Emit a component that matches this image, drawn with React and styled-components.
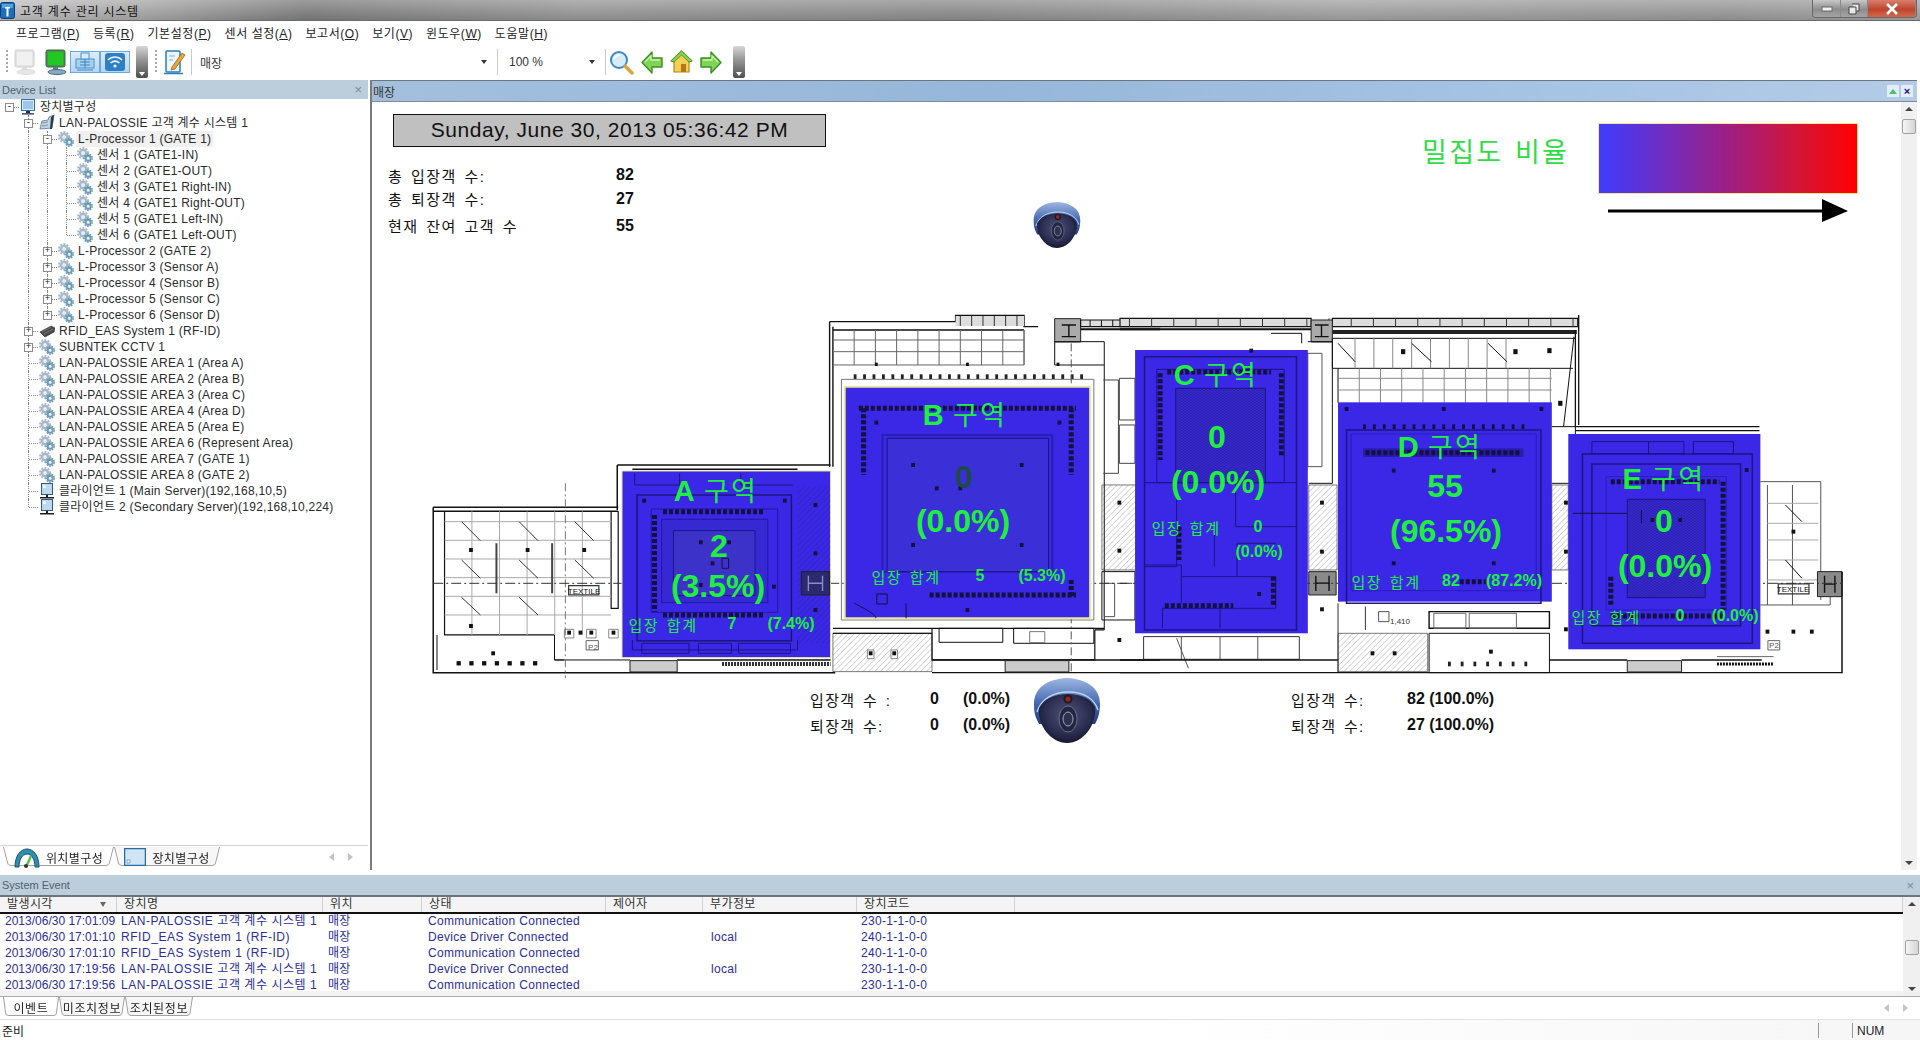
import React from 'react';
import styled, { createGlobalStyle } from 'styled-components';

const FONT = `"Liberation Sans", "Noto Sans CJK KR", sans-serif`;
const GREEN = '#1ff03f';
const ZONE_BLUE = '#3a28e6';
const PLAN_X = 425;
const PLAN_Y = 310;

const GlobalStyle = createGlobalStyle`
    html, body {
        margin: 0;
        padding: 0;
        background: #fff;
        overflow: hidden;
    }
    body {
        font-family: ${FONT};
        font-size: 12px;
        color: #222;
    }
`;

const Window = styled.div`
    width: 1920px;
    height: 1040px;
    display: flex;
    flex-direction: column;
    overflow: hidden;
`;

/* title bar */
const TitleBar = styled.div`
    height: 20px;
    flex: none;
    display: flex;
    align-items: center;
    justify-content: space-between;
    border-bottom: 1px solid #6b6b6b;
    background: linear-gradient(180deg, rgba(255, 255, 255, 0.22), rgba(0, 0, 0, 0.1)),
        linear-gradient(90deg, #c4c4c4, #a8a8a8 8%, #7f7f7f 16%, #9a9a9a 30%, #8f8f8f 50%, #a5a5a5 70%, #9b9b9b 90%, #a8a8a8);
`;

const TitleLeft = styled.div`
    display: flex;
    align-items: center;
    gap: 5px;
    font-size: 12px;
    letter-spacing: 0.8px;
    color: #111;
`;

const WindowButtons = styled.div`
    display: flex;
    height: 17px;
    align-self: flex-start;
    margin-right: 3px;
    border: 1px solid #666;
    border-top: none;
    border-radius: 0 0 4px 4px;
    overflow: hidden;
`;

const WindowButton = styled.div`
    width: ${(p) => p.$w}px;
    display: flex;
    align-items: center;
    justify-content: center;
    border-right: 1px solid #8a8a8a;
    background: ${(p) =>
        p.$close
            ? 'linear-gradient(180deg, #d9806f, #c0442c 55%, #cf6a50)'
            : 'linear-gradient(180deg, #c8c8c8, #8d8d8d 55%, #a5a5a5)'};
`;

/* menu and tool bars */
const MenuBar = styled.div`
    height: 23px;
    flex: none;
    display: flex;
    align-items: center;
    gap: 13px;
    padding-left: 16px;
    background: #fff;
    font-size: 12px;
    letter-spacing: 0.55px;
    color: #222;
`;

const Mnemonic = styled.span`
    text-decoration: underline;
`;

const ToolBar = styled.div`
    height: 36px;
    flex: none;
    display: flex;
    align-items: center;
    padding-left: 6px;
    background: #fff;
`;

const Gripper = styled.div`
    width: 2px;
    height: 24px;
    flex: none;
    margin-right: ${(p) => p.$gap}px;
    background: repeating-linear-gradient(180deg, #a9a9a9 0 2px, transparent 2px 4px);
`;

const ToolSlot = styled.div`
    width: ${(p) => p.$w}px;
    height: 22px;
    flex: none;
    display: flex;
    align-items: center;
    justify-content: center;
    margin-right: ${(p) => p.$gap || 0}px;
`;

const ActiveSlot = styled(ToolSlot)`
    border: 1px solid #6fa9dc;
    box-sizing: border-box;
    background: linear-gradient(180deg, #dcecfa, #b5d6f3);
`;

const Overflow = styled.div`
    width: 12px;
    height: 32px;
    flex: none;
    margin: 0 ${(p) => p.$gap}px 0 6px;
    border-radius: 2px;
    display: flex;
    align-items: flex-end;
    justify-content: center;
    padding-bottom: 2px;
    box-sizing: border-box;
    background: linear-gradient(180deg, #d6d6d6, #9a9a9a 40%, #4f4f4f);
    &::after {
        content: '';
        border-left: 3px solid transparent;
        border-right: 3px solid transparent;
        border-top: 4px solid #fff;
    }
`;

const ToolSep = styled.div`
    width: 1px;
    height: 26px;
    flex: none;
    margin-right: ${(p) => p.$gap || 0}px;
    background: #c9c9c9;
`;

const Combo = styled.div`
    width: ${(p) => p.$w}px;
    height: 22px;
    flex: none;
    box-sizing: border-box;
    padding: 0 10px 0 ${(p) => p.$pad}px;
    display: flex;
    align-items: center;
    justify-content: space-between;
    font-size: 12px;
    color: #333;
`;

const ComboArrow = styled.div`
    width: 0;
    border-left: 3px solid transparent;
    border-right: 3px solid transparent;
    border-top: 4px solid #333;
`;

/* work area */
const Workspace = styled.div`
    height: 790px;
    flex: none;
    display: flex;
`;

const Sidebar = styled.div`
    width: 368px;
    flex: none;
    display: flex;
    flex-direction: column;
`;

const DockHeader = styled.div`
    height: 19px;
    flex: none;
    display: flex;
    align-items: center;
    justify-content: space-between;
    padding: 0 ${(p) => p.$right || 4}px 0 2px;
    background: #bccddc;
    font-size: 11px;
    color: #51606e;
`;

const CloseMark = styled.span`
    font-size: 13px;
    line-height: 13px;
    color: #7d8b98;
`;

const TreeList = styled.div`
    flex: 1;
    overflow: hidden;
`;

const TreeRow = styled.div`
    height: 16px;
    display: flex;
    align-items: center;
`;

const TreeIndent = styled.div`
    width: 19px;
    height: 16px;
    flex: none;
    box-sizing: border-box;
    position: relative;
    &::before {
        content: '';
        display: ${(p) => (p.$line ? 'block' : 'none')};
        position: absolute;
        left: 9px;
        top: 0;
        bottom: 0;
        border-left: 1px dotted #888;
    }
`;

const TreeJoint = styled(TreeIndent)`
    display: flex;
    align-items: center;
    justify-content: flex-start;
    padding-left: 5px;
    &::before {
        bottom: ${(p) => (p.$last ? '8px' : '0')};
    }
    &::after {
        content: '';
        position: absolute;
        left: 10px;
        right: 0;
        top: 8px;
        border-top: 1px dotted #888;
    }
`;

const Expander = styled.div`
    width: 9px;
    height: 9px;
    box-sizing: border-box;
    position: relative;
    z-index: 1;
    border: 1px solid #8c8c8c;
    background: #fff;
    display: flex;
    align-items: center;
    justify-content: center;
    font-size: 9px;
    line-height: 7px;
    color: #222;
    font-family: "Liberation Mono", monospace;
`;

const TreeIcon = styled.div`
    width: 16px;
    height: 16px;
    flex: none;
    margin-left: 1px;
`;

const TreeText = styled.div`
    margin-left: 2px;
    padding: 0 2px;
    line-height: 16px;
    white-space: nowrap;
    letter-spacing: 0.25px;
    color: #2a2a2a;
    background: ${(p) => (p.$selected ? '#f0f0f0' : 'transparent')};
`;

const SideTabs = styled.div`
    height: 22px;
    flex: none;
    margin-bottom: 2px;
    display: flex;
    align-items: center;
    padding-left: 3px;
    border-top: 1px solid #d2d2d2;
    font-size: 12px;
    letter-spacing: 0.4px;
    color: #222;
`;

const Tab = styled.div`
    position: relative;
    z-index: ${(p) => (p.$active ? 2 : 1)};
    width: ${(p) => p.$w}px;
    height: 21px;
    flex: none;
    display: flex;
    align-items: center;
    justify-content: center;
    gap: 6px;
    &::before {
        content: '';
        position: absolute;
        inset: 0;
        z-index: -1;
        border: 1px solid #9d9d9d;
        border-top: none;
        border-radius: 0 0 4px 4px;
        background: ${(p) => (p.$active ? '#fff' : '#f7f7f7')};
        transform-origin: top;
        transform: perspective(30px) rotateX(-8deg);
    }
`;

const TabArrows = styled.div`
    margin-left: auto;
    margin-right: ${(p) => p.$right}px;
    display: flex;
    gap: 14px;
`;

const TabArrow = styled.div`
    width: 0;
    border-top: 4px solid transparent;
    border-bottom: 4px solid transparent;
    border-left: ${(p) => (p.$next ? '5px solid #c3c3c3' : 'none')};
    border-right: ${(p) => (p.$next ? 'none' : '5px solid #c3c3c3')};
`;

const MainPane = styled.div`
    flex: 1;
    display: flex;
    flex-direction: column;
    margin-left: 2px;
    margin-right: 3px;
    border-left: 2px solid #7b7b7b;
`;

const MainHeader = styled.div`
    height: 20px;
    flex: none;
    display: flex;
    align-items: center;
    justify-content: space-between;
    padding: 0 4px 0 1px;
    border-top: 1px solid #6d7680;
    border-bottom: 1px solid #7f8a96;
    background: linear-gradient(90deg, #a3bfdc, #96b7da 40%, #a9c5e4 80%, #b3cbe6);
    font-size: 12px;
    color: #333;
`;

const HeaderButtons = styled.div`
    display: flex;
    gap: 2px;
`;

const HeaderButton = styled.div`
    width: 12px;
    height: 12px;
    display: flex;
    align-items: center;
    justify-content: center;
    background: #e4eef8;
    font-size: 11px;
    line-height: 11px;
    font-weight: bold;
    color: #14148a;
`;

const MainBody = styled.div`
    flex: 1;
    display: flex;
    min-height: 0;
`;

const Canvas = styled.div`
    flex: 1;
    display: flex;
    flex-direction: column;
    overflow: hidden;
`;

const TopRow = styled.div`
    display: flex;
    align-items: flex-start;
    height: 134px;
    padding: 12px 43px 0 16px;
`;

const TopLeft = styled.div`
    width: 438px;
    flex: none;
`;

const DateBox = styled.div`
    width: 433px;
    height: 33px;
    margin-left: 5px;
    padding-bottom: 2px;
    box-sizing: border-box;
    display: flex;
    align-items: center;
    justify-content: center;
    border: 1px solid #111;
    background: #c0c0c0;
    font-size: 21px;
    letter-spacing: 0.55px;
    color: #111;
`;

const Totals = styled.div`
    display: grid;
    grid-template-columns: 228px 60px;
    grid-template-rows: 24px 23px 31px;
    margin-top: 16px;
    align-items: center;
`;

const TotalLabel = styled.div`
    font-size: 15px;
    letter-spacing: 1.5px;
    word-spacing: 2px;
    white-space: nowrap;
    color: #111;
`;

const BoldValue = styled.div`
    font-size: 16px;
    font-weight: bold;
    white-space: nowrap;
    color: #111;
`;

const TopCamera = styled.div`
    flex: none;
    margin: 88px 0 0 207px;
`;

const Legend = styled.div`
    margin-left: auto;
    display: flex;
    gap: 29px;
    padding-top: 9px;
`;

const LegendLabel = styled.div`
    font-size: 27px;
    line-height: 60px;
    letter-spacing: 2.2px;
    word-spacing: 2px;
    white-space: nowrap;
    color: #2fdc45;
`;

const LegendBar = styled.div`
    width: 260px;
    height: 71px;
    border: 1px solid #ffe78a;
    box-sizing: border-box;
    background: linear-gradient(90deg, #3f3cff, #9a2088 48%, #d41535 78%, #ff0000);
`;

const LegendArrow = styled.div`
    height: 26px;
    margin: 4px 0 0 10px;
`;

const PlanWrap = styled.div`
    position: relative;
    width: 1430px;
    height: 368px;
    flex: none;
    margin: 62px 0 0 53px;
`;

const PlanSvg = styled.svg`
    display: block;
    * {
        vector-effect: non-scaling-stroke;
    }
`;

const ZoneText = styled.div`
    position: absolute;
    left: ${(p) => p.$x - PLAN_X}px;
    top: ${(p) => p.$y - PLAN_Y - 1}px;
    transform: translate(-50%, -50%);
    white-space: nowrap;
    color: ${(p) => p.$color || GREEN};
`;

const ZoneTitle = styled(ZoneText)`
    top: ${(p) => p.$y - PLAN_Y - 3}px;
    font-size: 27px;
    letter-spacing: 2.4px;
    word-spacing: -3px;
    b {
        font-size: 29px;
    }
`;

const ZoneCount = styled(ZoneText)`
    font-size: 32px;
    font-weight: bold;
`;

const ZoneSum = styled(ZoneText)`
    font-size: 15px;
    letter-spacing: 1.5px;
    word-spacing: 2px;
`;

const ZoneSumValue = styled(ZoneText)`
    font-size: 16px;
    font-weight: bold;
`;

const GateRow = styled.div`
    display: flex;
    align-items: flex-start;
    padding-left: 438px;
`;

const GateStats = styled.div`
    display: grid;
    grid-template-columns: ${(p) => p.$cols};
    grid-auto-rows: 26px;
    align-items: center;
    margin: 8px ${(p) => p.$right || 0}px 0 ${(p) => p.$left || 0}px;
`;

const GateLabel = styled.div`
    font-size: 15px;
    letter-spacing: 1.35px;
    word-spacing: 2px;
    white-space: nowrap;
    color: #111;
`;

const VScroll = styled.div`
    width: ${(p) => p.$w}px;
    flex: none;
    display: flex;
    flex-direction: column;
    align-items: center;
    background: #f0f0f0;
    box-sizing: border-box;
    padding: 5px 0;
`;

const ScrollArrow = styled.div`
    width: 0;
    flex: none;
    border-left: 4px solid transparent;
    border-right: 4px solid transparent;
    border-bottom: ${(p) => (p.$down ? 'none' : '4px solid #444')};
    border-top: ${(p) => (p.$down ? '4px solid #444' : 'none')};
    margin-top: ${(p) => (p.$down ? 'auto' : '0')};
`;

const ScrollThumb = styled.div`
    width: 14px;
    height: 15px;
    flex: none;
    margin-top: ${(p) => p.$top}px;
    box-sizing: border-box;
    border: 1px solid #a2a2a2;
    border-radius: 2px;
    background: linear-gradient(90deg, #f5f5f5, #d5d5d5);
`;

/* events */
const EventPanel = styled.div`
    height: 144px;
    flex: none;
    margin-top: 5px;
    display: flex;
    flex-direction: column;
`;

const EventHeader = styled(DockHeader)`
    height: 20px;
    border-bottom: 2px solid #6f7478;
    box-sizing: content-box;
`;

const EventMain = styled.div`
    height: 99px;
    flex: none;
    display: flex;
`;

const EventTable = styled.div`
    flex: 1;
    min-width: 0;
    display: flex;
    flex-direction: column;
`;

const GRID = '117px 206px 99px 184px 97px 154px 158px 1fr';

const EventHead = styled.div`
    height: 15px;
    flex: none;
    display: grid;
    grid-template-columns: ${GRID};
    border-bottom: 2px solid #111;
    background: #f4f4f4;
    font-size: 12px;
    line-height: 15px;
    letter-spacing: 0.4px;
    color: #333;
`;

const HeadCell = styled.div`
    display: flex;
    align-items: flex-start;
    justify-content: space-between;
    padding: 0 10px 0 7px;
    border-right: 1px solid #d0d0d0;
`;

const SortMark = styled.span`
    width: 0;
    margin-top: 5px;
    border-left: 3px solid transparent;
    border-right: 3px solid transparent;
    border-top: 5px solid #666;
`;

const EventBody = styled.div`
    height: 77px;
    overflow: hidden;
    flex: none;
`;

const EventRow = styled.div`
    height: 16px;
    box-sizing: border-box;
    padding-bottom: 1px;
    display: grid;
    grid-template-columns: ${GRID};
    align-items: center;
    font-size: 12px;
    line-height: 13px;
    letter-spacing: 0.32px;
    color: #2c2c9c;
    white-space: nowrap;
`;

const EventCell = styled.div`
    padding-left: ${(p) => p.$pad}px;
`;

const TimeCell = styled(EventCell)`
    letter-spacing: 0;
`;

const NameCell = styled(EventCell)`
    letter-spacing: 0.55px;
`;

const EventStrip = styled.div`
    flex: 1;
    background: #f2f2f2;
`;

const BottomTabs = styled.div`
    height: 21px;
    flex: none;
    display: flex;
    align-items: center;
    padding-left: 3px;
    border-top: 1px solid #a9a9a9;
    font-size: 12px;
    letter-spacing: 0.7px;
`;

const StatusBar = styled.div`
    height: 21px;
    flex: none;
    display: flex;
    align-items: center;
    padding-left: 2px;
    border-top: 1px solid #e2e2e2;
    background: linear-gradient(90deg, #fff 60%, #f6f6f6);
    font-size: 12px;
`;

const StatusCell = styled.div`
    width: ${(p) => p.$w}px;
    height: 15px;
    flex: none;
    display: flex;
    align-items: center;
    padding-left: 4px;
    box-sizing: border-box;
    border-left: 1px solid #999;
`;

const StatusEnd = styled(StatusCell)`
    margin-right: 32px;
`;

const StatusText = styled.div`
    margin-right: auto;
`;

/* icons */
const TitleIcon = () => (
    <svg width="15" height="17" viewBox="0 0 15 17">
        <rect x="0.5" y="0.5" width="14" height="16" rx="2" fill="#1f6fb8" stroke="#0e3f73" />
        <rect x="2" y="2" width="11" height="4" fill="#4fa3e0" />
        <path d="M5 5h5v1.5H8.5v8h-2v-8H5z" fill="#fff" />
    </svg>
);

const Gears = () => (
    <svg width="16" height="16" viewBox="0 0 16 16">
        <circle cx="6" cy="6" r="3.1" fill="#e6eef4" stroke="#a5b9c9" strokeWidth="2.2" />
        <circle cx="6" cy="6" r="5" fill="none" stroke="#a5b9c9" strokeWidth="2" strokeDasharray="1.9 1.3" />
        <circle cx="11.2" cy="11.2" r="2.5" fill="#f0f6fa" stroke="#6b9abb" strokeWidth="1.9" />
        <circle cx="11.2" cy="11.2" r="4" fill="none" stroke="#6b9abb" strokeWidth="1.6" strokeDasharray="1.6 1.2" />
    </svg>
);

const Monitor = () => (
    <svg width="16" height="16" viewBox="0 0 16 16">
        <rect x="1.5" y="0.5" width="13" height="11" fill="#dcebf7" stroke="#2f6fa8" />
        <path d="M3 2h10v8H3z" fill="#9cc7ea" />
        <path d="M6 12h4v2H6z" fill="#2a2a3a" />
        <path d="M2 14.2h12v1.3H2z" fill="#16324f" />
    </svg>
);

const LanFolder = () => (
    <svg width="16" height="16" viewBox="0 0 16 16">
        <path d="M1 14L3 6l6-1 1-3 5-2-2 13z" fill="#c3d4e3" stroke="#557a9a" strokeWidth="0.8" />
        <path d="M12 2l3-2-2 14h-2z" fill="#2d3a48" />
        <path d="M3 8l6-1M3 11l6-1" stroke="#7c9ab3" />
    </svg>
);

const Chip = () => (
    <svg width="16" height="16" viewBox="0 0 16 16">
        <path d="M1 9l11-6 4 2-1 4-9 5z" fill="#4b4b4b" stroke="#222" strokeWidth="0.6" />
        <path d="M3 9l9-5M5 11l9-5" stroke="#8a8a8a" strokeWidth="0.7" />
    </svg>
);

const Client = () => (
    <svg width="16" height="16" viewBox="0 0 16 16">
        <rect x="2.5" y="0.5" width="11" height="11" fill="#bcd9ef" stroke="#34597a" />
        <rect x="4" y="2" width="3" height="3" fill="#eef6fc" />
        <path d="M7 12h2v2H7z" fill="#222" />
        <path d="M1 14h14v1.5H1z" fill="#1a1a2a" />
    </svg>
);

const TREE_ICONS = { monitor: Monitor, lan: LanFolder, gears: Gears, chip: Chip, client: Client };

const PcIcon = ({ on }) => (
    <svg width="24" height="26" viewBox="0 0 24 26">
        <rect x="2" y="1" width="19" height="17" rx="2" fill={on ? '#4f8f4f' : '#e3e3e3'} stroke={on ? '#2e6a3a' : '#d0d0d0'} />
        <rect x="4" y="3" width="15" height="13" fill={on ? '#22c822' : '#f1f1f1'} />
        <path d="M9 18h5v3H9z" fill={on ? '#5f7f8f' : '#dedede'} />
        <ellipse cx="13" cy="23" rx="9" ry="2.5" fill={on ? '#8aa7bb' : '#e6e6e6'} stroke={on ? '#3d6d8f' : '#ddd'} />
    </svg>
);

const NetButton = () => (
    <svg width="22" height="20" viewBox="0 0 22 20">
        <rect x="2" y="7" width="18" height="9" fill="#a8d0f0" stroke="#4b90c8" />
        <rect x="7" y="1" width="8" height="6" fill="#d8ecfb" stroke="#4b90c8" />
        <path d="M3 18h16M11 7v9M6 10h10M6 13h10" stroke="#3f85bf" />
    </svg>
);

const WifiButton = () => (
    <svg width="22" height="20" viewBox="0 0 22 20">
        <rect x="1" y="1" width="20" height="18" rx="3" fill="#2d80c6" />
        <path d="M4 8c4-4 10-4 14 0M6.5 11c3-2.5 6-2.5 9 0" fill="none" stroke="#e8f3fc" strokeWidth="1.6" />
        <circle cx="11" cy="14" r="1.6" fill="#e8f3fc" />
    </svg>
);

const EditIcon = () => (
    <svg width="24" height="26" viewBox="0 0 24 26">
        <rect x="3" y="2" width="14" height="21" rx="1" fill="#eaf5fc" stroke="#2b7fb8" strokeWidth="1.5" />
        <path d="M1 24.5h19" stroke="#2b7fb8" strokeWidth="1.5" />
        <path d="M9 18l10-14 3 2-10 14-4 1z" fill="#e8a53a" stroke="#8c5a12" strokeWidth="0.7" />
        <path d="M6 7h6M6 11h4" stroke="#7fb6da" />
    </svg>
);

const SearchIcon = () => (
    <svg width="25" height="25" viewBox="0 0 25 25">
        <circle cx="10" cy="10" r="8" fill="#d6ecfb" stroke="#3f87c4" strokeWidth="2" />
        <path d="M5 9c1-3 3-4 6-4" fill="none" stroke="#fff" strokeWidth="1.6" />
        <path d="M16 16l7 7" stroke="#d8a640" strokeWidth="3.5" strokeLinecap="round" />
    </svg>
);

const ArrowIcon = ({ flip }) => (
    <svg width="23" height="23" viewBox="0 0 23 23">
        <path
            d={flip ? 'M22 11.5L12 1v6H2v9h10v6z' : 'M1 11.5L11 1v6h10v9H11v6z'}
            fill="#7fd455"
            stroke="#3b8f25"
            strokeWidth="1.4"
            strokeLinejoin="round"
        />
        <path d={flip ? 'M4 9h9V5l6 6' : 'M19 9h-9V5l-6 6'} fill="none" stroke="#c9f5ad" strokeWidth="1.3" />
    </svg>
);

const HomeIcon = () => (
    <svg width="23" height="24" viewBox="0 0 23 24">
        <path d="M11.5 1L22 11l-3 1v10H4V12l-3-1z" fill="#f5cf55" stroke="#b9871a" strokeWidth="1.2" strokeLinejoin="round" />
        <path d="M11.5 1L22 11l-3 1-7.5-7L4 12l-3-1z" fill="#8bd25d" stroke="#4d9a2c" strokeWidth="1" />
        <rect x="11" y="14" width="5" height="8" fill="#b07a18" />
    </svg>
);

const GaugeIcon = () => (
    <svg width="26" height="21" viewBox="0 0 26 21">
        <path d="M1 20C1 8 7 2 13 2s12 6 12 18h-4c0-7-3-13-8-13S5 13 5 20z" fill="#2a8fb0" stroke="#1d4e6a" />
        <path d="M12 20L17 9" stroke="#5cc04a" strokeWidth="2.5" />
        <circle cx="12" cy="19" r="2" fill="#333" />
    </svg>
);

const ListIcon = () => (
    <svg width="22" height="18" viewBox="0 0 22 18">
        <rect x="0.5" y="0.5" width="21" height="17" fill="#cfe4f5" stroke="#2a6aa0" strokeWidth="1.5" />
        <rect x="3" y="12" width="3" height="3" fill="#fff" stroke="#2a6aa0" strokeWidth="0.5" />
    </svg>
);

const Camera = ({ w, h }) => (
    <svg width={w} height={h} viewBox="0 0 68 65">
        <defs>
            <linearGradient id="camTop" x1="0" y1="0" x2="0" y2="1">
                <stop offset="0" stopColor="#9db6e2" />
                <stop offset="0.6" stopColor="#3e62ab" />
                <stop offset="1" stopColor="#24407f" />
            </linearGradient>
            <radialGradient id="camBody" cx="0.5" cy="0.42" r="0.62">
                <stop offset="0" stopColor="#4f5278" />
                <stop offset="0.65" stopColor="#2b2d50" />
                <stop offset="1" stopColor="#11122a" />
            </radialGradient>
        </defs>
        <path d="M1 28C0 10 14 1 34 0c20 1 33 10 33 26 0 9-2 15-5 20L6 46C3 40 1 36 1 28z" fill="url(#camTop)" />
        <path d="M4 34C8 21 20 14 36 14c14 0 25 6 29 18" fill="none" stroke="#bcd4ef" strokeWidth="1.4" />
        <path d="M6 30c5-9 15-14 29-14 13 0 23 5 27 13 2 18-12 36-28 36C18 65 4 47 6 30z" fill="url(#camBody)" />
        <circle cx="35" cy="21" r="4.5" fill="#1a1a28" />
        <circle cx="35" cy="21" r="2.6" fill="#a3201a" />
        <ellipse cx="35" cy="41" rx="9" ry="13" fill="#23243e" stroke="#6a6d8a" />
        <ellipse cx="35" cy="41" rx="5" ry="7" fill="#2f3150" stroke="#a3a6bd" />
    </svg>
);

/* floor plan */
const range = (from, to, step) => {
    const out = [];
    for (let v = from; v <= to; v += step) out.push(v);
    return out;
};

const Ink = ({ d, w = 1, c = '#111', dash }) => (
    <path d={d} fill="none" stroke={c} strokeWidth={w} strokeDasharray={dash} />
);

const Dots = ({ points, c = '#111', w = 8, h = 12 }) => (
    <>
        {points.map(([x, y], i) => (
            <rect key={i} x={x - w / 2} y={y - h / 2} width={w} height={h} fill={c} />
        ))}
    </>
);

const Box = ({ x, y, w, h, c = '#111', sw = 1, fill = 'none' }) => (
    <rect x={x} y={y} width={w} height={h} fill={fill} stroke={c} strokeWidth={sw} />
);

const Hatch = ({ x, y, w, h }) => <rect x={x} y={y} width={w} height={h} fill="url(#hatch)" stroke="#222" strokeWidth="0.6" />;

const HBox = ({ x, y, w, h, fill = '#8a8a8a', ink = '#111' }) => (
    <>
        <rect x={x} y={y} width={w} height={h} fill={fill} stroke="#222" />
        <path d={`M${x + 15} ${y + 12}V${y + h - 12}M${x + w - 15} ${y + 12}V${y + h - 12}M${x + 15} ${y + h / 2}H${x + w - 15}`} stroke={ink} strokeWidth="1.4" />
    </>
);

const Band = ({ d }) => <Ink d={d} w={5} c="#15103f" dash="4 2" />;

const Spots = ({ y, from, to, step }) => (
    <Dots points={range(from, to, step).map((x) => [x, y])} c="#222" w={6} h={14} />
);

const WestPlan = () => (
    <g transform="translate(420 310) scale(.4719 .3333)">
        <Ink d="M28 592H420M28 604H420M28 592V1088H880" w={1.5} />
        <Ink d="M52 604V975H285M405 604V895H420V604" w={1.2} />
        <Ink d="M418 465V600M418 465H870M450 478H800" w={1.5} />
        {range(110, 345, 58.5).map((x) => <Ink key={x} d={`M${x} 604V975`} c="#aaa" />)}
        {range(635, 915, 56).map((y) => <Ink key={y} d={`M52 ${y}H405`} c="#aaa" />)}
        <Ink d="M88 635L128 692M210 635L250 692M328 635L368 692M88 750L128 805M210 750L250 805M328 750L368 805M88 862L128 915M210 862L250 915" c="#333" />
        <Ink d="M162 700V850M280 700V850" w={2} c="#444" />
        <Dots points={[[108, 720], [228, 720], [348, 720], [108, 948], [155, 1030], [340, 968]]} />
        <Box x={306} y={958} w={20} h={26} c="#888" />
        <Box x={353} y={958} w={20} h={26} c="#888" />
        <Box x={400} y={958} w={20} h={26} c="#888" />
        <Dots points={[[316, 968], [363, 968], [410, 968]]} />
        <Box x={352} y={992} w={26} h={28} c="#666" />
        <Ink d="M36 975V1080M285 975V1050L305 1050M285 1050H445" />
        <Dots points={range(82, 245, 27).map((x) => [x, 1060])} w={9} h={13} />
        <Ink d="M308 520V1140" c="#777" dash="8 3 2 3" />
        <Box x={315} y={827} w={64} h={28} c="#333" sw={1.2} />
        <Ink d="M868 35V470M875 50V470M868 35H1135V16H1280V50H1310M875 60H1280" w={1.4} />
        <rect x="1135" y="18" width="145" height="30" fill="#ddd" />
        {range(1145, 1280, 24).map((x) => <Ink key={x} d={`M${x} 18V48`} c="#333" />)}
        {range(920, 1280, 45).map((x) => <Ink key={x} d={`M${x} 60V165`} c="#666" />)}
        <Ink d="M875 90H1280M875 125H1280M875 165H1280M1280 60V165" c="#666" />
        <Dots points={[[967, 163], [1160, 163], [1352, 163]]} w={6} h={10} />
        <rect x="1345" y="26" width="55" height="70" fill="#aaa" stroke="#222" />
        <Ink d="M1360 45H1390M1375 45V80M1360 80H1390" w={1.4} />
        <rect x="1400" y="30" width="168" height="20" fill="#ddd" stroke="#111" strokeWidth="1.2" />
        <Ink d="M1400 58H1568" w={2} />
        {range(1420, 1568, 24).map((x) => <Ink key={x} d={`M${x} 30V50`} />)}
        <Ink d="M1345 95H1450V960M1345 165H1450M1345 95V165" />
        <Spots y={200} from={922} to={1410} step={20} />
        <Box x={893} y={208} w={535} h={722} c="#777" fill="#fff" />
        <Ink d="M1448 210H1480V490H1448M1482 205H1515V330H1482ZM1482 345H1515V460H1482Z" c="#444" />
        <Hatch x={1445} y={525} w={72} h={255} />
        <Ink d="M1445 785H1515V930H1445Z" />
        <Box x={1450} y={820} w={22} h={100} c="#555" />
        <Dots points={[[1482, 578], [1482, 722], [1482, 990]]} />
        <Ink d="M875 955H1450M1450 960H1430M875 970H1085" w={1.2} />
        <Hatch x={875} y={970} w={210} h={115} />
        <Box x={948} y={1020} w={14} h={26} c="#888" fill="#fff" />
        <Box x={998} y={1020} w={14} h={26} c="#888" fill="#fff" />
        <Dots points={[[955, 1030], [1005, 1030]]} />
        <Ink d="M1085 955V1050H1430V960" w={1.2} />
        <Box x={1100} y={955} w={135} h={42} />
        <Box x={1258} y={955} w={170} h={45} />
        <Box x={1292} y={965} w={32} h={33} c="#777" />
        <Ink d="M1085 1050H1568M1085 1088H1568" w={1.4} />
        <rect x="1240" y="1052" width="135" height="34" fill="#ccc" stroke="#222" />
        <rect x="445" y="1052" width="100" height="34" fill="#ccc" stroke="#222" />
        <Ink d="M545 1050H870" w={1.4} />
        <Ink d="M640 1062H870" w={4} dash="2 1" c="#333" />
        <Ink d="M1380 100V1088" c="#555" dash="8 3 2 3" />
        <Ink d="M28 820H1568" c="#333" dash="10 3 2 3" />
        <rect x="428" y="483" width="442" height="560" fill={ZONE_BLUE} stroke="#e7e7a0" strokeWidth="1" />
        <rect x="800" y="530" width="70" height="470" fill="url(#zoneHatch)" />
        <Box x={460} y={555} w={327} h={437} c="#1d1480" sw={1.5} />
        <Box x={490} y={597} w={268} h={310} c="#2418a0" />
        <Box x={512} y={628} w={225} h={250} c="#2418a0" fill="#3629d4" />
        <Box x={537} y={662} w={173} h={195} c="#1d1480" fill="#3c32ca" />
        <Ink d="M455 490V525H550V490M680 490V525H790M450 990V1020H800V990" c="#1d1480" />
        <Ink d="M470 1000V1030H570V1000ZM590 1000V1030H660V1000ZM675 1000V1030H785V1000Z" c="#1d1480" />
        <Band d="M515 605H730M497 615V905M515 915H730" />
        <Dots points={[[595, 697], [655, 697], [620, 760], [595, 825], [655, 825], [475, 572], [773, 572], [750, 830]]} c="#15103f" />
        <Box x={640} y={745} w={14} h={30} c="#15103f" />
        <HBox x={808} y={785} w={60} h={70} fill="#2b2a70" ink="#8c8cc0" />
        <Dots points={[[838, 585], [838, 730], [838, 900]]} c="#15103f" />
        <rect x="900" y="230" width="520" height="695" fill={ZONE_BLUE} stroke="#e7e7a0" strokeWidth="2" />
        <Box x={980} y={375} w={360} h={410} c="#2c1eb0" sw={2} />
        <Box x={990} y={385} w={342} h={400} c="#1d1480" fill="#3b30d8" />
        <Band d="M930 295H1390M940 295V495M1380 295V495M1080 855H1390M1380 810V860" />
        <Dots points={[[1045, 465], [1275, 465], [1045, 705], [1275, 705], [1095, 535], [1145, 535], [967, 338], [1355, 338], [1160, 900]]} c="#15103f" />
        <Box x={968} y={852} w={22} h={30} c="#15103f" />
        <Ink d="M920 880C950 900 970 920 965 925M1030 880V925" c="#15103f" />
    </g>
);

const EastPlan = () => (
    <g transform="translate(1120 310) scale(.4719 .3333)">
        <rect x="0" y="25" width="405" height="25" fill="#ddd" stroke="#111" strokeWidth="1.2" />
        <rect x="450" y="25" width="520" height="25" fill="#ddd" stroke="#111" strokeWidth="1.2" />
        {range(20, 960, 47).map((x) => <Ink key={x} d={`M${x} 25V50`} c="#333" />)}
        <Ink d="M0 58H405" w={2} />
        <rect x="450" y="60" width="518" height="12" fill="#222" />
        <rect x="405" y="30" width="45" height="66" fill="#aaa" stroke="#222" />
        <Ink d="M413 45H442M427 45V80M413 80H442" w={1.4} />
        <Ink d="M965 60V350M972 15V345" w={1.3} />
        <Ink d="M450 85H965M450 85V175H960M462 175V278" />
        {range(498, 820, 40).map((x) => <Ink key={x} d={`M${x} 85V175`} c="#888" />)}
        <Ink d="M462 100L498 155M618 100L660 155M780 100L820 155" />
        {range(507, 915, 45).map((x) => <Ink key={x} d={`M${x} 175V278`} c="#888" />)}
        <Ink d="M462 205H915M462 240H915" c="#888" />
        <Dots points={[[600, 125], [838, 125], [910, 122], [933, 280]]} w={9} h={15} />
        <Ink d="M962 80L940 350M915 350H965V520H915" />
        <Box x={398} y={130} w={30} h={340} c="#555" />
        <Ink d="M398 95H450V280M320 70H385V100M450 280V520H400" />
        <Hatch x={400} y={525} w={60} h={255} />
        <Hatch x={915} y={525} w={35} h={255} />
        <Dots points={[[428, 578], [428, 725], [945, 578], [945, 725], [428, 898], [945, 958]]} />
        <HBox x={400} y={785} w={58} h={70} />
        <Box x={548} y={905} w={22} h={30} c="#555" />
        <Ink d="M462 880V1088M520 890V960" c="#333" />
        <Box x={655} y={905} w={255} h={50} sw={1.4} />
        <Box x={665} y={910} w={68} h={45} c="#666" />
        <Box x={740} y={910} w={100} h={45} c="#666" />
        <Box x={655} y={970} w={255} h={118} />
        <Spots y={1062} from={698} to={860} step={27} />
        <Dots points={[[786, 1025]]} />
        <Box x={50} y={980} w={330} h={68} c="#333" />
        <Ink d="M130 980V1048M212 980V1048M292 980V1048M120 985L145 1075" c="#555" />
        <Ink d="M0 1050H462M0 1088H1530M910 1050H1075M1190 1050H1360" w={1.4} />
        <Hatch x={462} y={970} w={190} h={115} />
        <Dots points={[[535, 1030], [582, 1030]]} />
        <Ink d="M1357 515H1485V870M1372 525V885M1425 525V885M1357 885H1505V785" c="#555" />
        <Ink d="M1372 580H1480M1372 640H1480M1372 690H1480M1372 750H1480M1372 810H1480" c="#aaa" />
        <Ink d="M1410 585L1445 635M1410 750L1445 805" />
        <Dots points={[[1427, 665], [1427, 965], [1372, 965], [1466, 965]]} />
        <Box x={1373} y={992} w={25} h={28} c="#666" />
        <HBox x={1478} y={785} w={52} h={75} />
        <Box x={1395} y={822} w={65} h={30} c="#333" sw={1.2} />
        <Ink d="M1530 785V1090" w={1.5} />
        <Ink d="M965 350H1355M965 362H1355" w={1.4} />
        <rect x="1075" y="1052" width="115" height="34" fill="#ccc" stroke="#222" />
        <Ink d="M1265 1062H1385" w={3} dash="2 1" />
        <Ink d="M1265 1040H1385" c="#666" />
        <Ink d="M0 820H1530" c="#333" dash="10 3 2 3" />
        <rect x="32" y="120" width="366" height="850" fill={ZONE_BLUE} />
        <Box x={52} y={140} w={322} h={820} c="#1d1480" sw={1.5} />
        <Box x={78} y={178} w={270} h={340} c="#1d1480" />
        <rect x="118" y="235" width="190" height="283" fill="url(#checker)" stroke="#1d1480" />
        <Ink d="M52 518H375M52 765H130V880M200 650V770M130 800H330V895H90V955M245 520V650H375M120 520V770H52M212 895V955M330 700H248V800" c="#1d1480" />
        <Band d="M100 186H320M85 190V450M342 190V440M95 887H240M125 650V750M325 800V890" />
        <Dots points={[[295, 852], [278, 122]]} c="#15103f" />
        <rect x="462" y="277" width="453" height="598" fill={ZONE_BLUE} />
        <Box x={480} y={360} w={412} h={520} c="#1d1480" sw={1.5} />
        <Box x={490} y={372} w={392} h={470} c="#2a1cb8" />
        <Dots points={[[480, 297], [686, 297], [893, 297], [580, 482], [792, 482], [580, 760], [792, 760]]} c="#15103f" />
        <Dots points={range(518, 865, 21).map((x) => [x, 350])} c="#15103f" w={6} h={14} />
        <rect x="515" y="415" width="340" height="26" fill="#2a1cb0" />
        <Band d="M520 428H850M720 815H775" />
        <rect x="950" y="372" width="407" height="646" fill={ZONE_BLUE} />
        <Box x={980} y={432} w={360} h={568} c="#1d1480" sw={1.5} />
        <Box x={1000} y={462} w={315} h={485} c="#1d1480" sw={1.5} />
        <Box x={1030} y={500} w={255} h={400} c="#2a1cb8" />
        <rect x="1075" y="568" width="165" height="295" fill="url(#checker)" stroke="#1d1480" />
        <Box x={1000} y={395} w={120} h={36} c="#1d1480" />
        <Box x={1120} y={395} w={75} h={36} c="#1d1480" />
        <Box x={1215} y={395} w={85} h={36} c="#1d1480" />
        <Band d="M1278 515V900M1040 515H1270M1040 918H1280M1040 800V890" />
        <Dots points={[[1128, 630], [1187, 630], [1328, 480]]} c="#15103f" />
        <Ink d="M960 610H1075M1105 600V640" c="#15103f" />
    </g>
);

const PlanText = ({ x, y, c = '#111', children }) => (
    <text x={x} y={y} textAnchor="middle" fontSize="8" fontFamily={FONT} fill={c}>
        {children}
    </text>
);

const FloorPlan = () => (
    <PlanSvg width="1430" height="368" viewBox={`${PLAN_X} ${PLAN_Y} 1430 368`}>
        <defs>
            <pattern id="hatch" patternUnits="userSpaceOnUse" width="10" height="10" patternTransform="rotate(35)">
                <path d="M0 0V10" stroke="#222" strokeWidth="1" />
            </pattern>
            <pattern id="zoneHatch" patternUnits="userSpaceOnUse" width="10" height="10" patternTransform="rotate(35)">
                <path d="M0 0V10" stroke="#15103f" strokeWidth="1" />
            </pattern>
            <pattern id="checker" patternUnits="userSpaceOnUse" width="8" height="8">
                <rect width="8" height="8" fill="#3a2cd8" />
                <rect width="4" height="4" fill="#2a1ea8" />
                <rect x="4" y="4" width="4" height="4" fill="#2a1ea8" />
            </pattern>
        </defs>
        <WestPlan />
        <EastPlan />
        <PlanText x={584} y={594}>TEXTILE</PlanText>
        <PlanText x={1793} y={592}>TEXTILE</PlanText>
        <PlanText x={593} y={650} c="#555">P2</PlanText>
        <PlanText x={1774} y={648} c="#555">P2</PlanText>
        <PlanText x={1400} y={624} c="#333">1,410</PlanText>
    </PlanSvg>
);

const ZONES = [
    { letter: 'A', title: [716, 492], count: '2', countAt: [719, 547], pct: '(3.5%)', pctAt: [718, 587], sumAt: [663, 625], val: '7', valAt: [732, 625], rate: '(7.4%)', rateAt: [791, 625] },
    { letter: 'B', title: [965, 416], count: '0', countAt: [964, 478], countColor: '#204a4a', pct: '(0.0%)', pctAt: [963, 522], sumAt: [906, 577], val: '5', valAt: [980, 577], rate: '(5.3%)', rateAt: [1042, 577] },
    { letter: 'C', title: [1216, 376], count: '0', countAt: [1217, 438], pct: '(0.0%)', pctAt: [1218, 483], sumAt: [1186, 528], val: '0', valAt: [1258, 528], rate: '(0.0%)', rateAt: [1259, 553] },
    { letter: 'D', title: [1440, 448], count: '55', countAt: [1445, 487], pct: '(96.5%)', pctAt: [1446, 532], sumAt: [1386, 582], val: '82', valAt: [1451, 582], rate: '(87.2%)', rateAt: [1514, 582] },
    { letter: 'E', title: [1664, 480], count: '0', countAt: [1664, 522], pct: '(0.0%)', pctAt: [1665, 567], sumAt: [1606, 617], val: '0', valAt: [1680, 617], rate: '(0.0%)', rateAt: [1735, 617] },
];

const TREE = [
    { level: 0, icon: 'monitor', text: '장치별구성', open: true },
    { level: 1, icon: 'lan', text: 'LAN-PALOSSIE 고객 계수 시스템 1', open: true },
    { level: 2, icon: 'gears', text: 'L-Processor 1 (GATE 1)', open: true, selected: true },
    { level: 3, icon: 'gears', text: '센서 1 (GATE1-IN)' },
    { level: 3, icon: 'gears', text: '센서 2 (GATE1-OUT)' },
    { level: 3, icon: 'gears', text: '센서 3 (GATE1 Right-IN)' },
    { level: 3, icon: 'gears', text: '센서 4 (GATE1 Right-OUT)' },
    { level: 3, icon: 'gears', text: '센서 5 (GATE1 Left-IN)' },
    { level: 3, icon: 'gears', text: '센서 6 (GATE1 Left-OUT)', last: true },
    { level: 2, icon: 'gears', text: 'L-Processor 2 (GATE 2)', closed: true },
    { level: 2, icon: 'gears', text: 'L-Processor 3 (Sensor A)', closed: true },
    { level: 2, icon: 'gears', text: 'L-Processor 4 (Sensor B)', closed: true },
    { level: 2, icon: 'gears', text: 'L-Processor 5 (Sensor C)', closed: true },
    { level: 2, icon: 'gears', text: 'L-Processor 6 (Sensor D)', closed: true, last: true },
    { level: 1, icon: 'chip', text: 'RFID_EAS System 1 (RF-ID)', closed: true },
    { level: 1, icon: 'gears', text: 'SUBNTEK CCTV 1', closed: true },
    { level: 1, icon: 'gears', text: 'LAN-PALOSSIE AREA 1 (Area A)' },
    { level: 1, icon: 'gears', text: 'LAN-PALOSSIE AREA 2 (Area B)' },
    { level: 1, icon: 'gears', text: 'LAN-PALOSSIE AREA 3 (Area C)' },
    { level: 1, icon: 'gears', text: 'LAN-PALOSSIE AREA 4 (Area D)' },
    { level: 1, icon: 'gears', text: 'LAN-PALOSSIE AREA 5 (Area E)' },
    { level: 1, icon: 'gears', text: 'LAN-PALOSSIE AREA 6 (Represent Area)' },
    { level: 1, icon: 'gears', text: 'LAN-PALOSSIE AREA 7 (GATE 1)' },
    { level: 1, icon: 'gears', text: 'LAN-PALOSSIE AREA 8 (GATE 2)' },
    { level: 1, icon: 'client', text: '클라이언트 1 (Main Server)(192,168,10,5)' },
    { level: 1, icon: 'client', text: '클라이언트 2 (Secondary Server)(192,168,10,224)', last: true },
];

const MENU = [
    ['프로그램', 'P'],
    ['등록', 'R'],
    ['기본설정', 'P'],
    ['센서 설정', 'A'],
    ['보고서', 'O'],
    ['보기', 'V'],
    ['윈도우', 'W'],
    ['도움말', 'H'],
];

const EVENT_HEAD = ['발생시각', '장치명', '위치', '상태', '제어자', '부가정보', '장치코드', ''];
const LAN_NAME = 'LAN-PALOSSIE 고객 계수 시스템 1';
const RFID_NAME = 'RFID_EAS System 1 (RF-ID)';
const COMM = 'Communication Connected';
const DRIVER = 'Device Driver Connected';

const EVENTS = [
    ['2013/06/30 17:01:09', LAN_NAME, COMM, '', '230-1-1-0-0'],
    ['2013/06/30 17:01:10', RFID_NAME, DRIVER, 'local', '240-1-1-0-0'],
    ['2013/06/30 17:01:10', RFID_NAME, COMM, '', '240-1-1-0-0'],
    ['2013/06/30 17:19:56', LAN_NAME, DRIVER, 'local', '230-1-1-0-0'],
    ['2013/06/30 17:19:56', LAN_NAME, COMM, '', '230-1-1-0-0'],
];

const Tree = () => (
    <TreeList>
        {TREE.map((row) => {
            const Icon = TREE_ICONS[row.icon];
            const indents = [];
            for (let i = 0; i < row.level; i++) indents.push(<TreeIndent key={i} $line={i > 0} />);
            return (
                <TreeRow key={row.text}>
                    {indents}
                    <TreeJoint $line={row.level > 0} $last={row.last}>
                        {(row.open || row.closed) && <Expander>{row.open ? '-' : '+'}</Expander>}
                    </TreeJoint>
                    <TreeIcon>
                        <Icon />
                    </TreeIcon>
                    <TreeText $selected={row.selected}>{row.text}</TreeText>
                </TreeRow>
            );
        })}
    </TreeList>
);

const App = () => (
    <Window>
        <GlobalStyle />
        <TitleBar>
            <TitleLeft>
                <TitleIcon />
                고객 계수 관리 시스템
            </TitleLeft>
            <WindowButtons>
                <WindowButton $w={27}>
                    <svg width="12" height="6"><rect x="1" y="1" width="10" height="4" fill="#f2f2f2" stroke="#666" /></svg>
                </WindowButton>
                <WindowButton $w={26}>
                    <svg width="12" height="12"><path d="M4 1h7v7h-2M1 4h7v7H1z" fill="#e8e8e8" stroke="#444" /></svg>
                </WindowButton>
                <WindowButton $w={47} $close>
                    <svg width="14" height="12"><path d="M2 1l10 10M12 1L2 11" stroke="#fff" strokeWidth="2.6" /></svg>
                </WindowButton>
            </WindowButtons>
        </TitleBar>
        <MenuBar>
            {MENU.map(([name, key]) => (
                <span key={name}>
                    {name}(<Mnemonic>{key}</Mnemonic>)
                </span>
            ))}
        </MenuBar>
        <ToolBar>
            <Gripper $gap={5} />
            <ToolSlot $w={24} $gap={7}><PcIcon /></ToolSlot>
            <ToolSlot $w={24} $gap={2}><PcIcon on /></ToolSlot>
            <ActiveSlot $w={30}><NetButton /></ActiveSlot>
            <ActiveSlot $w={30}><WifiButton /></ActiveSlot>
            <Overflow $gap={7} />
            <Gripper $gap={6} />
            <ToolSlot $w={24} $gap={4}><EditIcon /></ToolSlot>
            <ToolSep />
            <Combo $w={305} $pad={8}>매장<ComboArrow /></Combo>
            <ToolSep />
            <Combo $w={107} $pad={11}>100 %<ComboArrow /></Combo>
            <ToolSep $gap={3} />
            <ToolSlot $w={25} $gap={7}><SearchIcon /></ToolSlot>
            <ToolSlot $w={23} $gap={6}><ArrowIcon /></ToolSlot>
            <ToolSlot $w={23} $gap={6}><HomeIcon /></ToolSlot>
            <ToolSlot $w={23} $gap={5}><ArrowIcon flip /></ToolSlot>
            <Overflow $gap={0} />
        </ToolBar>
        <Workspace>
            <Sidebar>
                <DockHeader $right={6}>
                    Device List
                    <CloseMark>×</CloseMark>
                </DockHeader>
                <Tree />
                <SideTabs>
                    <Tab $w={111} $active>
                        <GaugeIcon />
                        위치별구성
                    </Tab>
                    <Tab $w={106}>
                        <ListIcon />
                        장치별구성
                    </Tab>
                    <TabArrows $right={15}>
                        <TabArrow />
                        <TabArrow $next />
                    </TabArrows>
                </SideTabs>
            </Sidebar>
            <MainPane>
                <MainHeader>
                    매장
                    <HeaderButtons>
                        <HeaderButton>
                            <svg width="10" height="8"><path d="M1 7l4-5 4 5z" fill="#4bc26a" /></svg>
                        </HeaderButton>
                        <HeaderButton>×</HeaderButton>
                    </HeaderButtons>
                </MainHeader>
                <MainBody>
                    <Canvas>
                        <TopRow>
                            <TopLeft>
                                <DateBox>Sunday, June 30, 2013 05:36:42 PM</DateBox>
                                <Totals>
                                    <TotalLabel>총 입장객 수:</TotalLabel>
                                    <BoldValue>82</BoldValue>
                                    <TotalLabel>총 퇴장객 수:</TotalLabel>
                                    <BoldValue>27</BoldValue>
                                    <TotalLabel>현재 잔여 고객 수</TotalLabel>
                                    <BoldValue>55</BoldValue>
                                </Totals>
                            </TopLeft>
                            <TopCamera>
                                <Camera w={48} h={46} />
                            </TopCamera>
                            <Legend>
                                <LegendLabel>밀집도 비율</LegendLabel>
                                <div>
                                    <LegendBar />
                                    <LegendArrow>
                                        <svg width="240" height="26" viewBox="0 0 240 26">
                                            <path d="M0 13H214" stroke="#000" strokeWidth="3" />
                                            <path d="M214 1l26 12-26 11z" fill="#000" />
                                        </svg>
                                    </LegendArrow>
                                </div>
                            </Legend>
                        </TopRow>
                        <PlanWrap>
                            <FloorPlan />
                            {ZONES.map((z) => (
                                <React.Fragment key={z.letter}>
                                    <ZoneTitle $x={z.title[0]} $y={z.title[1]}>
                                        <b>{z.letter}</b> 구역
                                    </ZoneTitle>
                                    <ZoneCount $x={z.countAt[0]} $y={z.countAt[1]} $color={z.countColor}>{z.count}</ZoneCount>
                                    <ZoneCount $x={z.pctAt[0]} $y={z.pctAt[1]}>{z.pct}</ZoneCount>
                                    <ZoneSum $x={z.sumAt[0]} $y={z.sumAt[1]}>입장 합계</ZoneSum>
                                    <ZoneSumValue $x={z.valAt[0]} $y={z.valAt[1]}>{z.val}</ZoneSumValue>
                                    <ZoneSumValue $x={z.rateAt[0]} $y={z.rateAt[1]}>{z.rate}</ZoneSumValue>
                                </React.Fragment>
                            ))}
                        </PlanWrap>
                        <GateRow>
                            <GateStats $cols="120px 33px 48px" $right={22}>
                                <GateLabel>입장객 수 :</GateLabel>
                                <BoldValue>0</BoldValue>
                                <BoldValue>(0.0%)</BoldValue>
                                <GateLabel>퇴장객 수:</GateLabel>
                                <BoldValue>0</BoldValue>
                                <BoldValue>(0.0%)</BoldValue>
                            </GateStats>
                            <Camera w={68} h={65} />
                            <GateStats $cols="116px 90px" $left={190}>
                                <GateLabel>입장객 수:</GateLabel>
                                <BoldValue>82 (100.0%)</BoldValue>
                                <GateLabel>퇴장객 수:</GateLabel>
                                <BoldValue>27 (100.0%)</BoldValue>
                            </GateStats>
                        </GateRow>
                    </Canvas>
                    <VScroll $w={16}>
                        <ScrollArrow />
                        <ScrollThumb $top={8} />
                        <ScrollArrow $down />
                    </VScroll>
                </MainBody>
            </MainPane>
        </Workspace>
        <EventPanel>
            <EventHeader $right={6}>
                System Event
                <CloseMark>×</CloseMark>
            </EventHeader>
            <EventMain>
                <EventTable>
                    <EventHead>
                        {EVENT_HEAD.map((name, i) => (
                            <HeadCell key={i}>
                                {name}
                                {i === 0 && <SortMark />}
                            </HeadCell>
                        ))}
                    </EventHead>
                    <EventBody>
                        {EVENTS.map((ev, i) => (
                            <EventRow key={i}>
                                <TimeCell $pad={5}>{ev[0]}</TimeCell>
                                <NameCell $pad={4}>{ev[1]}</NameCell>
                                <EventCell $pad={5}>매장</EventCell>
                                <EventCell $pad={6}>{ev[2]}</EventCell>
                                <EventCell $pad={0} />
                                <EventCell $pad={8}>{ev[3]}</EventCell>
                                <EventCell $pad={4}>{ev[4]}</EventCell>
                            </EventRow>
                        ))}
                    </EventBody>
                    <EventStrip />
                </EventTable>
                <VScroll $w={17}>
                    <ScrollArrow />
                    <ScrollThumb $top={34} />
                    <ScrollArrow $down />
                </VScroll>
            </EventMain>
            <BottomTabs>
                <Tab $w={56} $active>이벤트</Tab>
                <Tab $w={66}>미조치정보</Tab>
                <Tab $w={68}>조치된정보</Tab>
                <TabArrows $right={12}>
                    <TabArrow />
                    <TabArrow $next />
                </TabArrows>
            </BottomTabs>
        </EventPanel>
        <StatusBar>
            <StatusText>준비</StatusText>
            <StatusCell $w={34} />
            <StatusEnd $w={36}>NUM</StatusEnd>
        </StatusBar>
    </Window>
);

export default App;
